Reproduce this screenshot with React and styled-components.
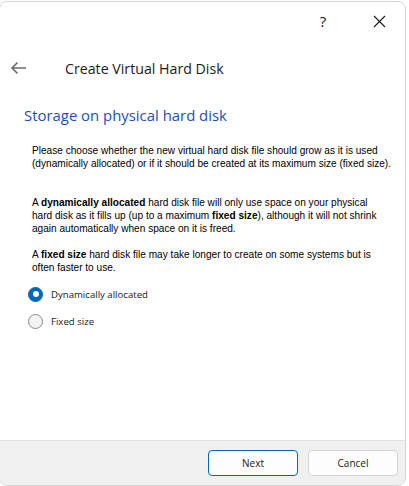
import styled, { createGlobalStyle } from 'styled-components';

const GlobalStyle = createGlobalStyle`
  html, body {
    margin: 0;
    padding: 0;
    background: #ffffff;
  }
  #root {
    width: 409px;
    height: 486px;
  }
`;

const Window = styled.div`
  box-sizing: border-box;
  width: 407px;
  height: 485px;
  margin-top: 1px;
  margin-left: -1px;
  border: 1px solid #d6d6d6;
  border-radius: 8px;
  background: #ffffff;
  display: flex;
  flex-direction: column;
  overflow: hidden;
  font-family: "Open Sans", "Noto Sans", sans-serif;
  color: #1a1a1a;
`;

const TitleBar = styled.div`
  height: 38px;
  display: flex;
  justify-content: flex-end;
  align-items: center;
  padding-right: 17px;
  gap: 38px;
`;

const TitleButton = styled.div`
  width: 18px;
  display: flex;
  justify-content: center;
  align-items: center;
  font-family: "Open Sans", sans-serif;
  font-size: 15px;
  color: #1a1a1a;
`;

const Header = styled.div`
  display: flex;
  align-items: center;
  height: 36px;
  margin-top: 10px;
  padding-left: 10px;
`;

const BackButton = styled.div`
  width: 17px;
  height: 16px;
  display: flex;
  align-items: center;
  margin-right: 38px;
`;

const HeaderTitle = styled.div`
  font-size: 14.2px;
  color: #1a1a1a;
`;

const Content = styled.div`
  flex: 1;
  padding: 0 0 0 24px;
`;

const SectionTitle = styled.div`
  margin-top: 19px;
  font-size: 14.9px;
  color: #1c4fb8;
`;

const Body = styled.div`
  margin-top: 19px;
  padding-left: 8px;
  font-family: "Liberation Sans", Arial, sans-serif;
  font-size: 10.1px;
  line-height: 13px;
  white-space: nowrap;
  color: #000000;
`;

const Para = styled.p`
  margin: 0;
  margin-bottom: ${props => props.$gap}px;
`;

const Options = styled.div`
  margin-top: 13px;
  display: flex;
  flex-direction: column;
  gap: 13px;
  padding-left: 4px;
`;

const Option = styled.label`
  display: flex;
  align-items: center;
  gap: 8px;
  height: 14px;
  font-size: 9.6px;
  color: #1a1a1a;
`;

const Radio = styled.span`
  box-sizing: border-box;
  width: 15px;
  height: 15px;
  border-radius: 50%;
  display: flex;
  align-items: center;
  justify-content: center;
  background: ${props => (props.$checked ? '#0067c0' : '#f3f3f3')};
  border: 1px solid ${props => (props.$checked ? '#0067c0' : '#8a8a8a')};

  &::after {
    content: '';
    display: ${props => (props.$checked ? 'block' : 'none')};
    width: 6px;
    height: 6px;
    border-radius: 50%;
    background: #ffffff;
  }
`;

const Footer = styled.div`
  box-sizing: border-box;
  height: 45px;
  background: #f0f0f0;
  border-top: 1px solid #e0e0e0;
  display: flex;
  justify-content: flex-end;
  align-items: flex-start;
  padding: 9px 7px 0 0;
  gap: 10px;
`;

const Button = styled.button`
  box-sizing: border-box;
  width: 90px;
  height: 26px;
  border-radius: 4px;
  font-family: "Open Sans", sans-serif;
  font-size: 10px;
  color: #1a1a1a;
  background: #fdfdfd;
  border: 1px solid ${props => (props.$primary ? '#0067c0' : '#d5d5d5')};
  padding: 0;
`;

export default function App() {
  return (
    <>
      <GlobalStyle />
      <Window>
        <TitleBar>
          <TitleButton>?</TitleButton>
          <TitleButton>
            <svg width="13" height="13" viewBox="0 0 13 13">
              <path d="M1 1 L12 12 M12 1 L1 12" stroke="#1a1a1a" strokeWidth="1.1" />
            </svg>
          </TitleButton>
        </TitleBar>
        <Header>
          <BackButton>
            <svg width="17" height="14" viewBox="0 0 17 14">
              <path d="M16 7 H2 M7.5 1.5 L2 7 L7.5 12.5" stroke="#6b6b6b" strokeWidth="1.6" fill="none" />
            </svg>
          </BackButton>
          <HeaderTitle>Create Virtual Hard Disk</HeaderTitle>
        </Header>
        <Content>
          <SectionTitle>Storage on physical hard disk</SectionTitle>
          <Body>
            <Para $gap={26}>
              Please choose whether the new virtual hard disk file should grow as it is used<br />
              (dynamically allocated) or if it should be created at its maximum size (fixed size).
            </Para>
            <Para $gap={13}>
              A <b>dynamically allocated</b> hard disk file will only use space on your physical<br />
              hard disk as it fills up (up to a maximum <b>fixed size</b>), although it will not shrink<br />
              again automatically when space on it is freed.
            </Para>
            <Para $gap={0}>
              A <b>fixed size</b> hard disk file may take longer to create on some systems but is<br />
              often faster to use.
            </Para>
          </Body>
          <Options>
            <Option>
              <Radio $checked />
              Dynamically allocated
            </Option>
            <Option>
              <Radio />
              Fixed size
            </Option>
          </Options>
        </Content>
        <Footer>
          <Button $primary>Next</Button>
          <Button>Cancel</Button>
        </Footer>
      </Window>
    </>
  );
}
